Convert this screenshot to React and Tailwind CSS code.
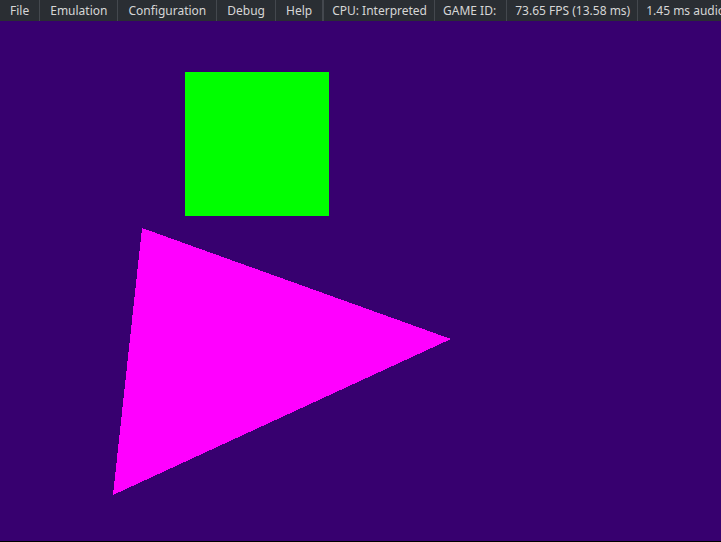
import React from "react";

const menu = ["File", "Emulation", "Configuration", "Debug", "Help"];
const status = ["CPU: Interpreted", "GAME ID:\u00a0", "73.65 FPS (13.58 ms)", "1.45 ms audio"];

export default function App() {
  return (
    <div className="w-[721px] h-[542px] flex flex-col bg-[#37006f] overflow-hidden" style={{ fontFamily: '"Noto Sans", sans-serif' }}>
      <div className="h-[21px] flex items-center bg-[#2a2e33] text-[#d6d6d6] text-[12px] whitespace-nowrap overflow-hidden shrink-0">
        {menu.map((m) => (
          <div key={m} className="h-full flex items-center px-[10px] border-r border-[#44484e]">{m}</div>
        ))}
        <div className="w-[8px] h-full border-r border-[#44484e]" />
        {status.map((s, i) => (
          <div key={s} className={"h-full flex items-center pl-[8px] pr-[7px] shrink-0 " + (i < status.length - 1 ? "border-r border-[#44484e]" : "")}>{s}</div>
        ))}
      </div>
      <div className="flex-1 relative">
        <svg width="721" height="520" viewBox="0 21 721 520" className="block" shapeRendering="crispEdges">
          <rect x="185" y="72" width="144" height="144" fill="#00ff00" />
          <polygon points="142,228 451,339 113,495" fill="#ff00ff" />
        </svg>
      </div>
      <div className="h-[1px] bg-black shrink-0" />
    </div>
  );
}
